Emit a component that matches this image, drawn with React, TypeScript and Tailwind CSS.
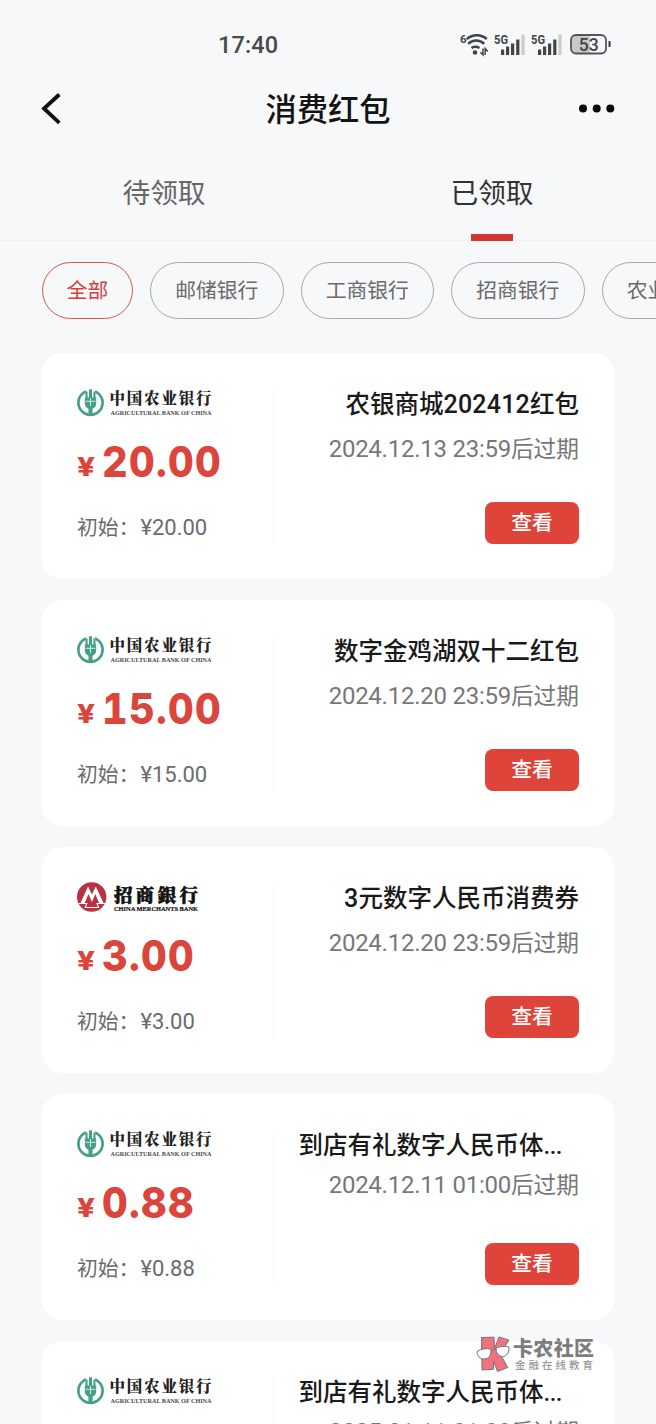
import React from "react";

function AbcLogo() {
  return (
    <svg width="136" height="32" viewBox="0 0 136 32" className="block overflow-visible">
      <circle cx="13.500" cy="14.700" r="12.100" fill="none" stroke="#45a084" strokeWidth="2.700" />
      <rect x="8.800" y="0" width="9.400" height="5" fill="#fff" />
      <path d="M11.900 1.300h3.200v25.700h-3.200z" fill="#45a084" />
      <path d="M8.500 3.500h2.200v6h5.600v-6h2.200v6h.7v6c0 3-2 4.600-3.700 5.200v5.800h-4v-5.800c-1.700-.6-3.700-2.200-3.700-5.200v-6h.7z" fill="#45a084" />
      <path d="M11.300 1.300v7.200M15.700 1.300v7.200M13.500 10v8M8.500 13.300h10" stroke="#fff" strokeWidth=".8" />
      <text x="32.500" y="16.300" textLength="102" fontSize="15.500" fontWeight="900" fill="#262122" fontFamily="'Noto Serif CJK SC','Noto Sans CJK SC',serif">中国农业银行</text>
      <text x="33.500" y="27.300" textLength="101" lengthAdjust="spacingAndGlyphs" fontSize="6.800" fontWeight="700" fill="#4a4647" fontFamily="'Liberation Serif',serif">AGRICULTURAL BANK OF CHINA</text>
    </svg>
  );
}

function CmbLogo() {
  return (
    <svg width="136" height="32" viewBox="0 0 136 32" className="block overflow-visible">
      <circle cx="14.700" cy="15" r="14.700" fill="#b8323f" />
      <path d="M3.500 21 11 4.500l3.900 8L18.800 4.500 26.500 21h-4.400L18.300 12l-3.400 8-3.400-8-3.800 9z" fill="#fff" />
      <path d="M1.500 21.500h8.300l-1.600 4h13.400l-1.600-4h8" fill="none" stroke="#fff" strokeWidth="1.100" />
      <text x="37" y="19.500" textLength="84" fontSize="18.500" fontWeight="900" fill="#111" stroke="#111" strokeWidth=".6" fontFamily="'Noto Serif CJK SC','Noto Sans CJK SC',serif">招商銀行</text>
      <text x="37" y="29.300" textLength="84" lengthAdjust="spacingAndGlyphs" fontSize="6.500" fontWeight="700" fill="#111" stroke="#111" strokeWidth=".2" fontFamily="'Liberation Serif',serif">CHINA MERCHANTS BANK</text>
    </svg>
  );
}

function Wifi() {
  return (
    <svg width="28" height="24" viewBox="0 0 28 24" className="block overflow-visible">
      <text x="0" y="8.500" fontSize="11.500" fontWeight="700" fill="#444" fontFamily="Roboto,sans-serif">6</text>
      <g fill="none" stroke="#444" strokeWidth="2.400">
        <path d="M6.800 5a15 15 0 0 1 20 0" />
        <path d="M8.200 9.800a11.500 11.500 0 0 1 16 0" />
        <path d="M11.500 14a7.500 7.500 0 0 1 8 0" />
      </g>
      <circle cx="15" cy="18.500" r="2.300" fill="#444" />
      <path d="M23 14.500v6.500l-2.600-2.700M25.200 21v-6.500l2.600 3" fill="none" stroke="#444" strokeWidth="1.500" />
    </svg>
  );
}

function Signal() {
  return (
    <svg width="31" height="24" viewBox="0 0 31 24" className="block overflow-visible">
      <text x="0" y="9.500" fontSize="13" fontWeight="700" textLength="14" lengthAdjust="spacingAndGlyphs" fill="#444" fontFamily="Roboto,sans-serif">5G</text>
      <path d="M7 15.500h3.200V21H7zM12 12.500h3.200V21H12zM17 9.500h3.200V21H17zM22.200 5.500h3.200V21h-3.200z" fill="#444" />
      <path d="M27.400 0.500h3.200V21h-3.200z" fill="#ccc" />
    </svg>
  );
}

function Battery() {
  return (
    <svg width="42" height="22" viewBox="0 0 42 22" className="block overflow-visible">
      <path d="M6 1h14v18.500H6a5 5 0 0 1-5-5V6a5 5 0 0 1 5-5z" fill="#c9c9ca" />
      <rect x="1" y="1" width="35" height="18.500" rx="5" fill="none" stroke="#555" strokeWidth="1.800" />
      <path d="M38.500 7h1.200a1 1 0 0 1 1 1v4a1 1 0 0 1-1 1h-1.200z" fill="#444" />
      <text x="18.800" y="16.500" textAnchor="middle" fontSize="17.500" fontWeight="500" fill="#444" textLength="20" lengthAdjust="spacingAndGlyphs" fontFamily="Roboto,sans-serif">53</text>
    </svg>
  );
}

function Watermark() {
  return (
    <div className="absolute top-[1334px] left-[476px] z-10">
      <svg width="122" height="42" viewBox="0 0 122 42" className="block overflow-visible">
        <g stroke="#777" strokeWidth="1" strokeLinejoin="round">
          <path d="M5.500 3.500 18 3.200l.5 11.500L23 3l10 3.200L24 19.500l7.800 14L21.500 37.500l-4-10.500v8.300L6 36z" fill="#f0727f" />
          <path d="M1 17.500c4-2.500 9-3.300 13.800-2.500.8 6-1.800 10-6.800 10-4 0-7-3-7-7.500zM20 14c4-1.800 8.500-2.200 13-1 .5 6-2.500 9.500-6.500 9.500-3.500 0-6.500-3-6.500-8.500z" fill="#fff" />
          <path d="m14.800 17 5.200-2" fill="none" />
        </g>
        <text x="37" y="21.500" textLength="81" fontSize="20" fontWeight="900" fill="#7d7d7d" fontFamily="'Noto Sans CJK SC',sans-serif">卡农社区</text>
        <text x="39" y="34.500" textLength="78" fontSize="10.500" fontWeight="500" fill="#999" fontFamily="'Noto Sans CJK SC',sans-serif">金融在线教育</text>
      </svg>
    </div>
  );
}

type Packet = { bank: "abc" | "cmb"; amount: string; title: string; date: string; long?: boolean };

const packets: Packet[] = [
  { bank: "abc", amount: "20.00", title: "农银商城202412红包", date: "2024.12.13 23:59" },
  { bank: "abc", amount: "15.00", title: "数字金鸡湖双十二红包", date: "2024.12.20 23:59" },
  { bank: "cmb", amount: "3.00", title: "3元数字人民币消费券", date: "2024.12.20 23:59" },
  { bank: "abc", amount: "0.88", title: "到店有礼数字人民币体...", date: "2024.12.11 01:00", long: true },
  { bank: "abc", amount: "0.88", title: "到店有礼数字人民币体...", date: "2025.01.11 01:00", long: true },
];

function Title({ text }: { text: string }) {
  return (
    <>
      {text.split(/([0-9]+|\.+)/).map((part, i) =>
        i % 2 === 0 ? part : part.startsWith(".")
          ? <span key={i} className="text-[24px] tracking-[-0.5px]">{part}</span>
          : <span key={i} className="text-[25px] tracking-[0.2px]">{part}</span>
      )}
    </>
  );
}

function Card({ p }: { p: Packet }) {
  return (
    <article className="flex h-[226px] shrink-0 rounded-[20px] bg-white px-[35px] pt-[35px]">
      <div className="flex h-[158px] w-[197px] shrink-0 flex-col border-r border-[#fafafa]">
        {p.bank === "abc" ? <AbcLogo /> : <CmbLogo />}
        <div className="mt-[15px] flex h-[52px] items-baseline font-['Inter',sans-serif] leading-[52px] text-[#db453b]">
          <span className="-mt-px w-[25px] origin-left -translate-y-px scale-x-[1.2] text-[26px] font-extrabold">¥</span>
          <span className="origin-left scale-x-[0.925] text-[43px] font-extrabold tracking-[1.4px] tabular-nums">{p.amount}</span>
        </div>
        <p className="mt-[26px] text-[20.8px] leading-[30px] text-[#6b6b6b]">初始：<span className="pl-px text-[22px]">¥{p.amount}</span></p>
      </div>
      <div className="flex flex-1 flex-col items-end whitespace-nowrap">
        <h2 className={p.long ? "mr-[17px] h-[32px] text-[24.5px] leading-[34px] font-medium text-[#1a1a1a]" : "h-[32px] text-[24.5px] leading-[34px] font-medium text-[#1a1a1a]"}><Title text={p.title} /></h2>
        <p className={p.long ? "mt-[6px] h-[35px] text-[22.7px] leading-[37px] text-[#777]" : "mt-[10px] h-[36px] text-[22.7px] leading-[38px] text-[#777]"}><span className="text-[24px] tracking-[-0.25px]">{p.date}</span>后过期</p>
        <button className={p.long ? "mt-[41px] h-[42px] w-[94px] rounded-[8px] bg-[#de4439] text-[20.8px] leading-[42px] font-medium text-white" : "mt-[36px] h-[42px] w-[94px] rounded-[8px] bg-[#de4439] text-[20.8px] leading-[42px] font-medium text-white"}>查看</button>
      </div>
    </article>
  );
}

export default function App() {
  return (
    <div className="relative flex h-[1424px] w-[656px] flex-col overflow-hidden bg-[#f7f8fa] font-[Roboto,'Noto_Sans_CJK_SC',sans-serif]">
      <div className="flex h-[80px] shrink-0 items-start justify-between pt-[34px] pr-[44px] pl-[218px]">
        <span className="text-[23.5px] leading-[22px] font-medium tracking-[0.1px] text-[#4a4a4a]">17:40</span>
        <div className="flex">
          <Wifi />
          <div className="ml-[6px]"><Signal /></div>
          <div className="ml-[6px]"><Signal /></div>
          <div className="ml-[8px]"><Battery /></div>
        </div>
      </div>
      <header className="flex h-[58px] shrink-0 items-center justify-between px-[41px]">
        <svg width="37" height="32" viewBox="0 0 37 32" fill="none" stroke="#111" strokeWidth="3.800"><path d="M18.300 1.500 3 15.500l15.300 14.300" /></svg>
        <h1 className="h-[58px] text-[31.3px] leading-[61px] font-medium text-[#141414]">消费红包</h1>
        <svg width="37" height="10" viewBox="0 0 37 10" fill="#0a0a0a"><circle cx="5" cy="4.500" r="4" /><circle cx="18.700" cy="4.500" r="4" /><circle cx="32.300" cy="4.500" r="4" /></svg>
      </header>
      <nav className="flex h-[103px] shrink-0 border-b border-[#f0f1f3] text-[27.7px]">
        <div className="flex w-1/2 flex-col items-center pt-[36px] leading-[40px] text-[#666]">待领取</div>
        <div className="flex w-1/2 flex-col items-center pt-[36px] leading-[40px] text-[#333]">
          已领取
          <span className="mt-[20px] h-[7px] w-[42px] shrink-0 bg-[#d63633]" />
        </div>
      </nav>
      <div className="flex h-[78px] shrink-0 gap-[17px] overflow-hidden pt-[21px] pl-[42px] text-[20.8px] leading-[57px]">
        <div className="h-[57px] w-[91px] shrink-0 rounded-full border border-[#dc5450] text-center text-[#d63f3a]">全部</div>
        {["邮储银行", "工商银行", "招商银行", "农业银行"].map((b) => (
          <div key={b} className="h-[57px] w-[133.5px] shrink-0 rounded-full border border-[#a9a9ab] text-center text-[#6b6b6b]">{b}</div>
        ))}
      </div>
      <main className="flex flex-col gap-[21px] px-[42px] pt-[34px]">
        {packets.map((p, i) => <Card key={i} p={p} />)}
      </main>
      <Watermark />
    </div>
  );
}
